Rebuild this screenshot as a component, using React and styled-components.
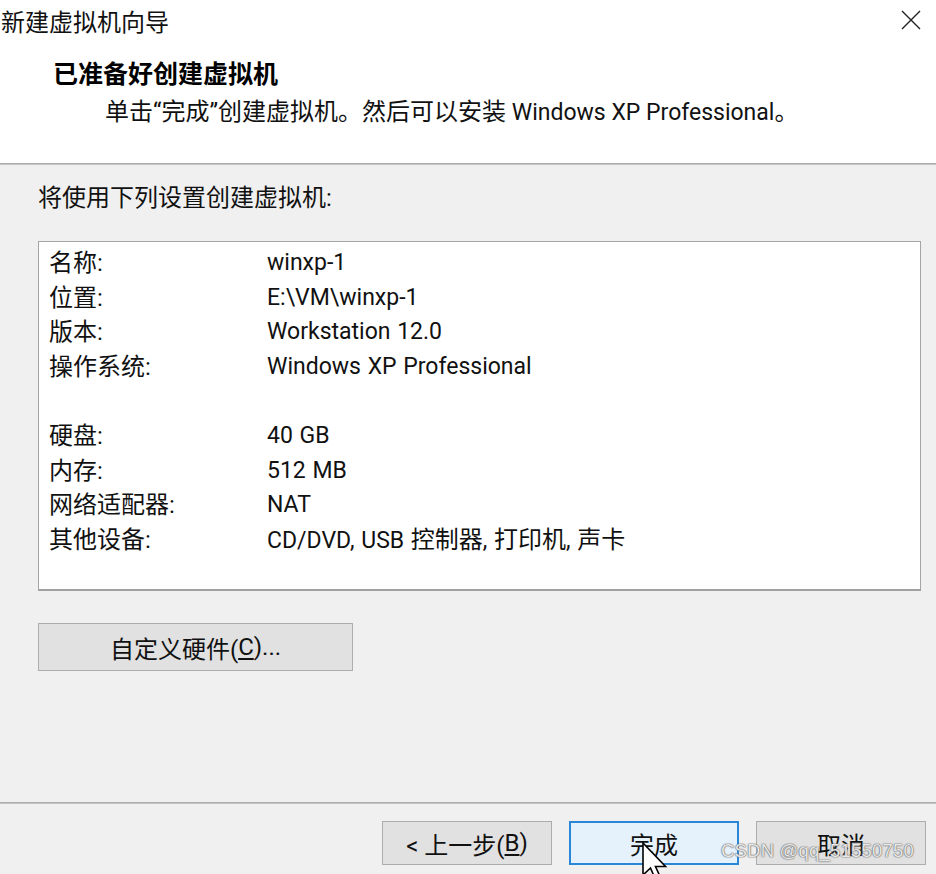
import React from "react";
import styled, { createGlobalStyle } from "styled-components";

const Global = createGlobalStyle`
  html, body { margin: 0; padding: 0; }
  body {
    background: #f0f0f0;
    font-family: Roboto, "Noto Sans CJK SC", sans-serif;
    color: #111;
  }
  #root { height: 874px; }
`;

const Window = styled.div`
  position: relative;
  width: 936px;
  height: 874px;
  display: flex;
  flex-direction: column;
  background: #f0f0f0;
  overflow: hidden;
`;

const Top = styled.div`
  background: #ffffff;
  display: flex;
  flex-direction: column;
`;

const TitleBar = styled.div`
  height: 40px;
  display: flex;
  align-items: center;
  justify-content: space-between;
  padding-left: 1px;
  padding-right: 14px;
  font-size: 24px;
  color: #111;
`;

const CloseBtn = styled.div`
  width: 22px;
  height: 22px;
  display: flex;
  align-items: center;
  justify-content: center;
`;

const Header = styled.div`
  padding: 18px 0 33px 53px;
  display: flex;
  flex-direction: column;
  gap: 3px;
`;

const Heading = styled.div`
  font-size: 25px;
  font-weight: 700;
  line-height: 34px;
  color: #000;
`;

const Sub = styled.div`
  padding-left: 52px;
  font-size: 23px;
  line-height: 34px;
  color: #111;
  white-space: nowrap;
`;

const Han = styled.span`
  font-size: 24px;
`;

const Separator = styled.div`
  height: 2px;
  background: #c4c4c4;
  border-top: 1px solid #acacac;
  box-sizing: border-box;
`;

const Body = styled.div`
  flex: 1;
  padding: 16px 15px 0 38px;
  display: flex;
  flex-direction: column;
  align-items: flex-start;
`;

const Intro = styled.div`
  font-size: 24px;
  line-height: 34px;
`;

const ListBox = styled.div`
  margin-top: 26px;
  align-self: stretch;
  height: 350px;
  box-sizing: border-box;
  background: #fff;
  border: 1px solid #a5a5a5;
  border-bottom: 2px solid #a0a0a0;
  padding: 4px 10px;
`;

const Row = styled.div`
  display: grid;
  grid-template-columns: 218px 1fr;
  height: 34.6px;
  line-height: 34.6px;
  white-space: nowrap;
`;

const Label = styled.span`
  font-size: 24px;
`;

const Value = styled.span`
  font-size: 23px;
  word-spacing: 1px;
`;

const Button = styled.div`
  box-sizing: border-box;
  display: flex;
  align-items: center;
  justify-content: center;
  width: ${(p) => p.$w || 170}px;
  height: ${(p) => p.$h || 44}px;
  background: ${(p) => (p.$primary ? "#e5f1fb" : "#e1e1e1")};
  border: ${(p) => (p.$primary ? "2px solid #2a86d6" : "1px solid #adadad")};
  font-size: 24px;
  color: #111;
  u { text-underline-offset: 3px; }
`;

const CustomButton = styled(Button)`
  margin-top: 32px;
`;

const Footer = styled.div`
  height: 70px;
  display: flex;
  justify-content: flex-end;
  align-items: flex-start;
  gap: 17px;
  padding: 17px 10px 0 0;
  box-sizing: border-box;
`;

const Cursor = styled.svg`
  position: absolute;
  left: 641px;
  top: 842px;
`;

const Watermark = styled.div`
  position: absolute;
  left: 721px;
  top: 840px;
  font-family: "Liberation Sans", Arial, sans-serif;
  font-size: 18.5px;
  color: rgba(255, 255, 255, 0.85);
  text-shadow: 0 0 1px #666, 0 0 1px #666, 0 0 2px #999;
  letter-spacing: 0.2px;
`;

const rows = [
  ["名称:", "winxp-1"],
  ["位置:", "E:\\VM\\winxp-1"],
  ["版本:", "Workstation 12.0"],
  ["操作系统:", "Windows XP Professional"],
  ["", ""],
  ["硬盘:", "40 GB"],
  ["内存:", "512 MB"],
  ["网络适配器:", "NAT"],
  [
    "其他设备:",
    <>
      CD/DVD, USB <Han>控制器</Han>, <Han>打印机</Han>, <Han>声卡</Han>
    </>,
  ],
];

export default function App() {
  return (
    <Window>
      <Global />
      <Top>
        <TitleBar>
          <span>新建虚拟机向导</span>
          <CloseBtn>
            <svg width="20" height="20" viewBox="0 0 20 20">
              <path d="M1 1 L19 19 M19 1 L1 19" stroke="#222" strokeWidth="1.4" fill="none" />
            </svg>
          </CloseBtn>
        </TitleBar>
        <Header>
          <Heading>已准备好创建虚拟机</Heading>
          <Sub>
            <Han>单击“完成”创建虚拟机。然后可以安装</Han> Windows XP Professional<Han>。</Han>
          </Sub>
        </Header>
      </Top>
      <Separator />
      <Body>
        <Intro>将使用下列设置创建虚拟机:</Intro>
        <ListBox>
          {rows.map(([k, v], i) => (
            <Row key={i}>
              <Label>{k}</Label>
              <Value>{v}</Value>
            </Row>
          ))}
        </ListBox>
        <CustomButton $w={315} $h={48}>
          自定义硬件(<u>C</u>)...
        </CustomButton>
      </Body>
      <Separator />
      <Footer>
        <Button>
          &lt; 上一步(<u>B</u>)
        </Button>
        <Button $primary>完成</Button>
        <Button>取消</Button>
      </Footer>
      <Watermark>CSDN @qq_51550750</Watermark>
      <Cursor width="34" height="40" viewBox="0 0 34 40">
        <path
          d="M2 1 L2 33 L9.5 26 L14.5 37.5 L19.5 35.5 L14.5 24.5 L24.5 24.5 Z"
          fill="#fff"
          stroke="#000"
          strokeWidth="1.6"
          strokeLinejoin="miter"
        />
      </Cursor>
    </Window>
  );
}
